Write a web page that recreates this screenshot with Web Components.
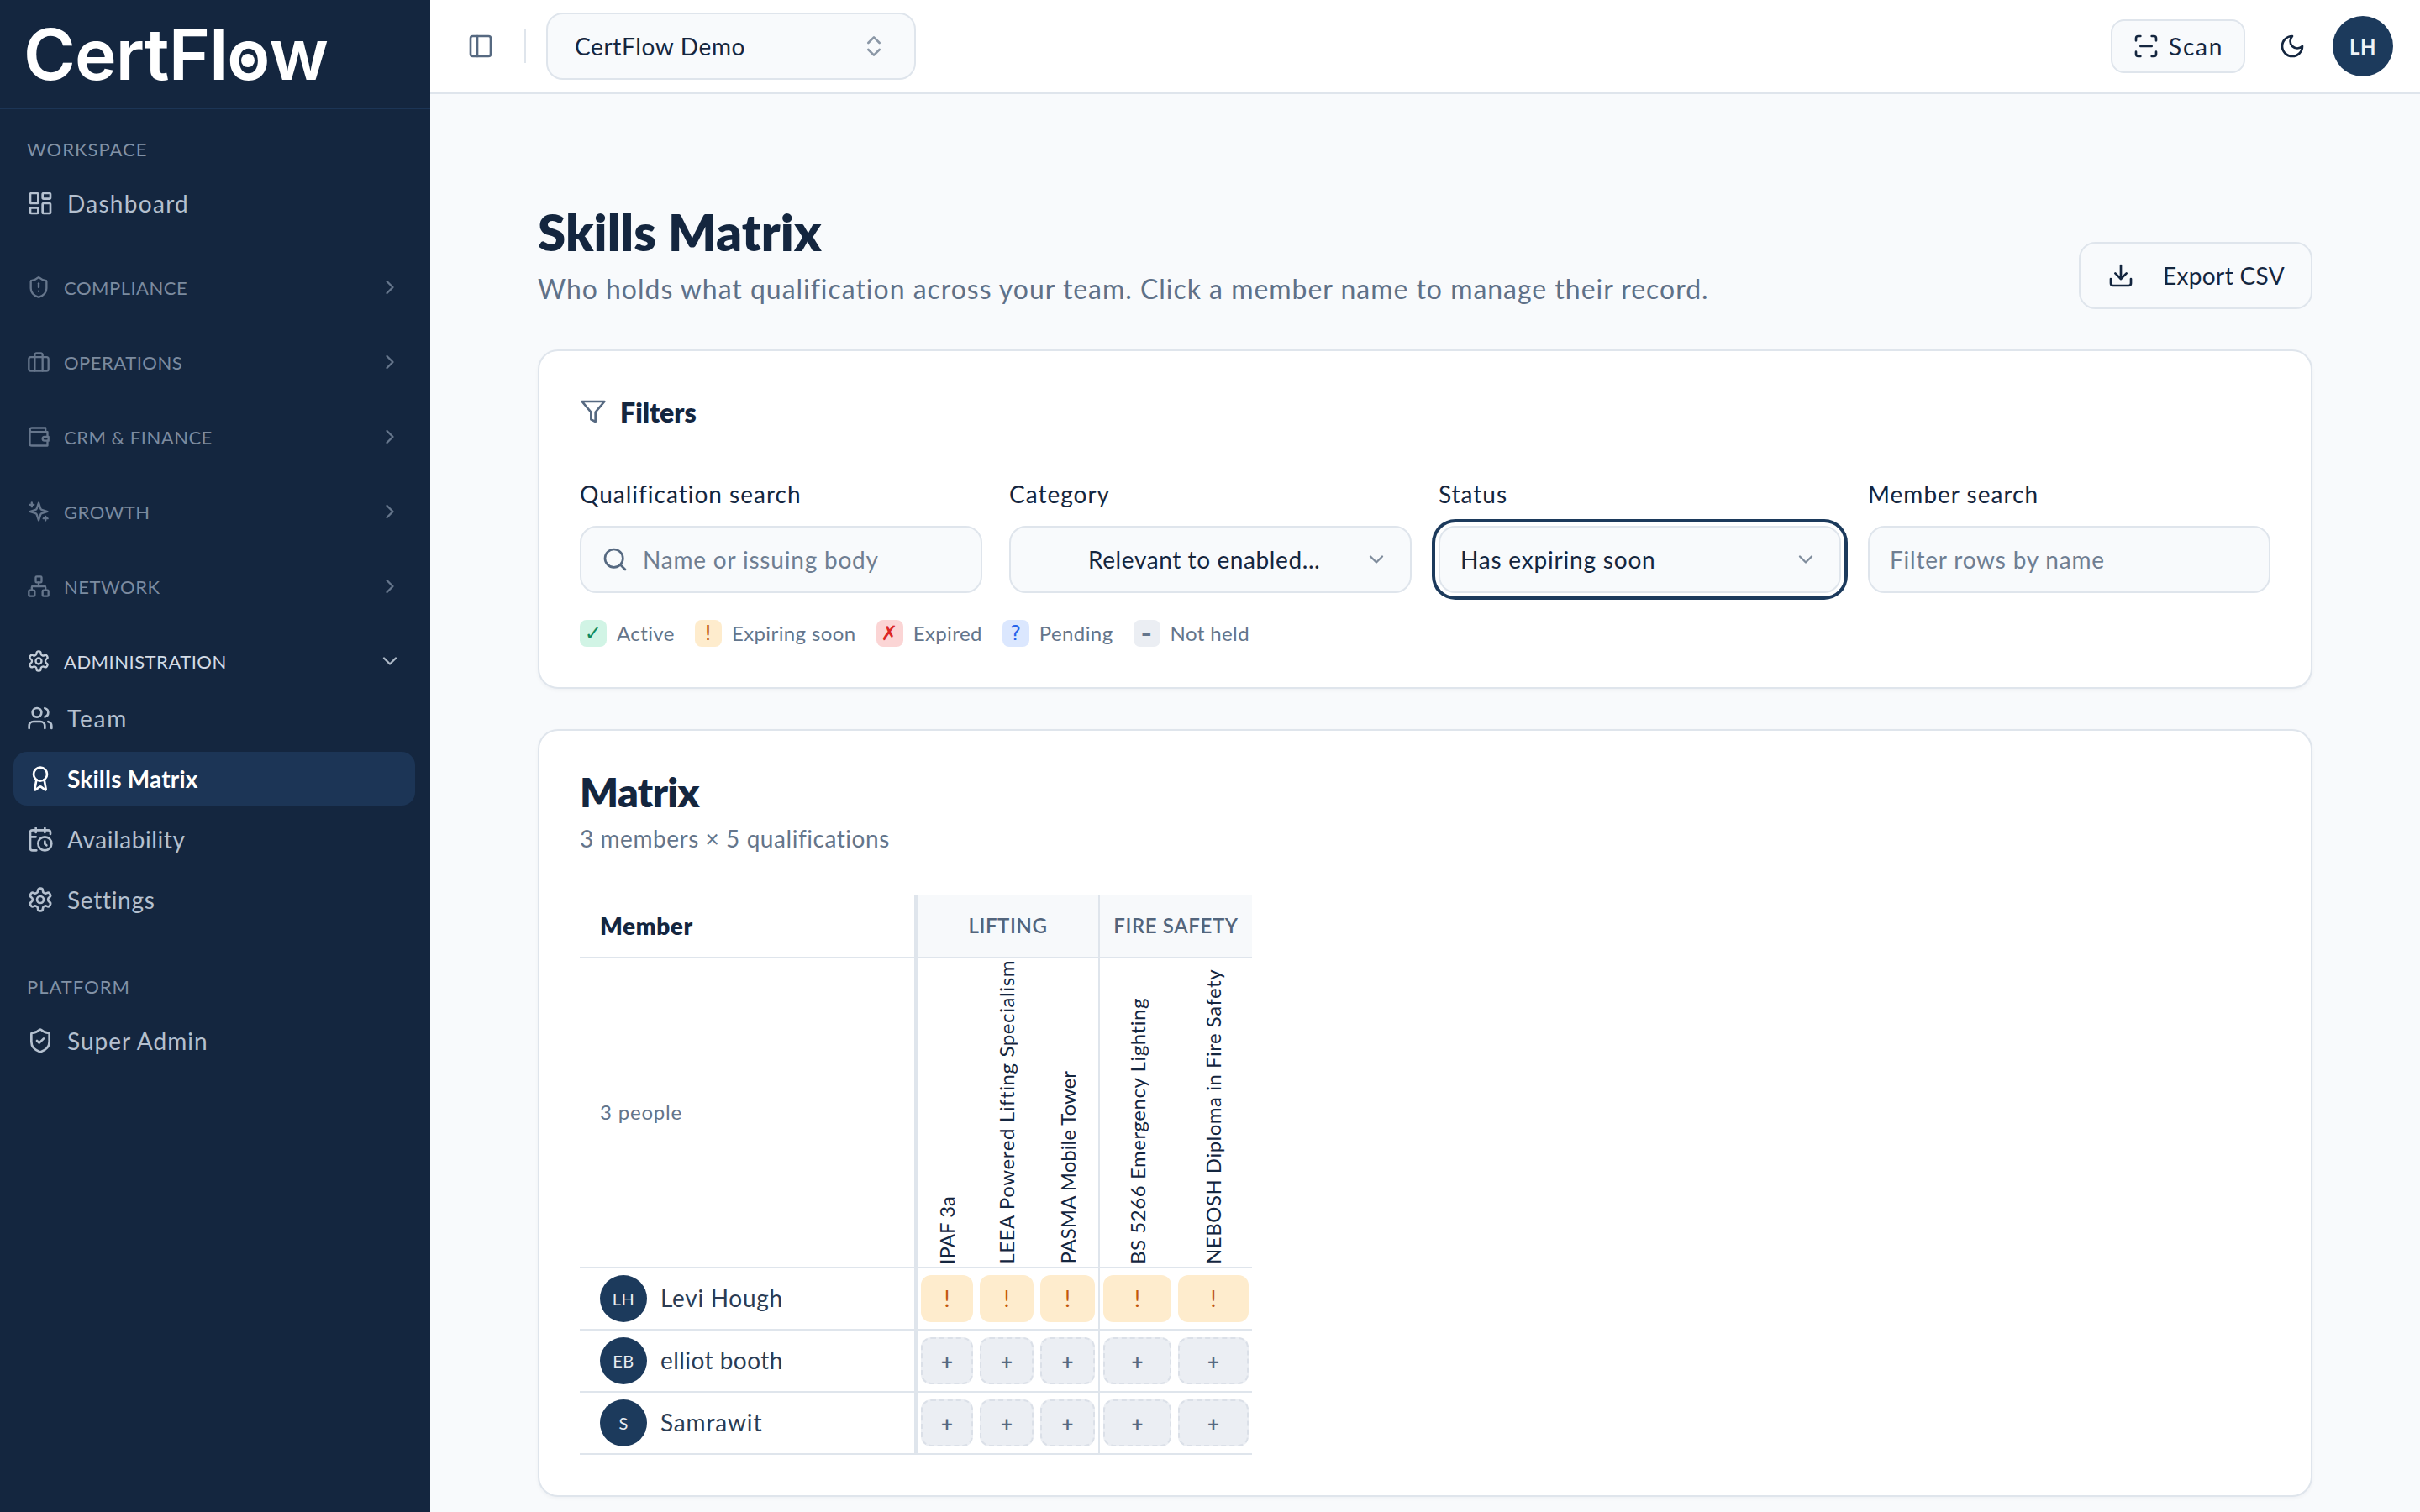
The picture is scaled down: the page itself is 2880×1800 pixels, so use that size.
<!doctype html>
<html lang="en">
<head>
<meta charset="utf-8">
<title>Skills Matrix</title>
<style>
html, body { margin: 0; height: 100%; background: #f8fafc; }
body { font-family: Lato, "Liberation Sans", sans-serif; color: #14263f; overflow: hidden; }
</style>
</head>
<body>
<app-shell>
  <side-bar slot="side"></side-bar>
  <top-bar slot="top"></top-bar>
  <page-head title="Skills Matrix" sub="Who holds what qualification across your team. Click a member name to manage their record."></page-head>
  <filter-card></filter-card>
  <matrix-card></matrix-card>
</app-shell>

<script>
var icons = {
  dashboard: '<rect width="7" height="9" x="3" y="3" rx="1"/><rect width="7" height="5" x="14" y="3" rx="1"/><rect width="7" height="9" x="14" y="12" rx="1"/><rect width="7" height="5" x="3" y="16" rx="1"/>',
  shieldAlert: '<path d="M20 13c0 5-3.5 7.5-7.66 8.95a1 1 0 0 1-.67-.01C7.5 20.5 4 18 4 13V6a1 1 0 0 1 1-1c2 0 4.5-1.2 6.24-2.72a1.17 1.17 0 0 1 1.52 0C14.51 3.81 17 5 19 5a1 1 0 0 1 1 1z"/><path d="M12 8v4"/><path d="M12 16h.01"/>',
  shieldCheck: '<path d="M20 13c0 5-3.5 7.5-7.66 8.95a1 1 0 0 1-.67-.01C7.5 20.5 4 18 4 13V6a1 1 0 0 1 1-1c2 0 4.5-1.2 6.24-2.72a1.17 1.17 0 0 1 1.52 0C14.51 3.81 17 5 19 5a1 1 0 0 1 1 1z"/><path d="m9 12 2 2 4-4"/>',
  briefcase: '<rect width="20" height="14" x="2" y="7" rx="2"/><path d="M16 21V5a2 2 0 0 0-2-2h-4a2 2 0 0 0-2 2v16"/>',
  wallet: '<path d="M21 12V7H5a2 2 0 0 1 0-4h14v4"/><path d="M3 5v14a2 2 0 0 0 2 2h16v-5"/><path d="M18 12a2 2 0 0 0 0 4h4v-4Z"/>',
  sparkles: '<path d="m12 3-1.912 5.813a2 2 0 0 1-1.275 1.275L3 12l5.813 1.912a2 2 0 0 1 1.275 1.275L12 21l1.912-5.813a2 2 0 0 1 1.275-1.275L21 12l-5.813-1.912a2 2 0 0 1-1.275-1.275L12 3Z"/><path d="M5 3v4"/><path d="M19 17v4"/><path d="M3 5h4"/><path d="M17 19h4"/>',
  network: '<rect x="16" y="16" width="6" height="6" rx="1"/><rect x="2" y="16" width="6" height="6" rx="1"/><rect x="9" y="2" width="6" height="6" rx="1"/><path d="M5 16v-3a1 1 0 0 1 1-1h12a1 1 0 0 1 1 1v3"/><path d="M12 12V8"/>',
  settings: '<path d="M12.22 2h-.44a2 2 0 0 0-2 2v.18a2 2 0 0 1-1 1.73l-.43.25a2 2 0 0 1-2 0l-.15-.08a2 2 0 0 0-2.73.73l-.22.38a2 2 0 0 0 .73 2.73l.15.1a2 2 0 0 1 1 1.72v.51a2 2 0 0 1-1 1.74l-.15.09a2 2 0 0 0-.73 2.73l.22.38a2 2 0 0 0 2.73.73l.15-.08a2 2 0 0 1 2 0l.43.25a2 2 0 0 1 1 1.73V20a2 2 0 0 0 2 2h.44a2 2 0 0 0 2-2v-.18a2 2 0 0 1 1-1.73l.43-.25a2 2 0 0 1 2 0l.15.08a2 2 0 0 0 2.73-.73l.22-.39a2 2 0 0 0-.73-2.73l-.15-.08a2 2 0 0 1-1-1.74v-.5a2 2 0 0 1 1-1.74l.15-.09a2 2 0 0 0 .73-2.73l-.22-.38a2 2 0 0 0-2.73-.73l-.15.08a2 2 0 0 1-2 0l-.43-.25a2 2 0 0 1-1-1.73V4a2 2 0 0 0-2-2z"/><circle cx="12" cy="12" r="3"/>',
  users: '<path d="M16 21v-2a4 4 0 0 0-4-4H6a4 4 0 0 0-4 4v2"/><circle cx="9" cy="7" r="4"/><path d="M22 21v-2a4 4 0 0 0-3-3.87"/><path d="M16 3.13a4 4 0 0 1 0 7.75"/>',
  award: '<path d="m15.477 12.89 1.515 8.526a.5.5 0 0 1-.81.47l-3.58-2.687a1 1 0 0 0-1.197 0l-3.586 2.686a.5.5 0 0 1-.81-.469l1.514-8.526"/><circle cx="12" cy="8" r="6"/>',
  calendarClock: '<path d="M21 7.5V6a2 2 0 0 0-2-2H5a2 2 0 0 0-2 2v14a2 2 0 0 0 2 2h3.5"/><path d="M16 2v4"/><path d="M8 2v4"/><path d="M3 10h5"/><path d="M17.5 17.5 16 16.3V14"/><circle cx="16" cy="16" r="6"/>',
  panelLeft: '<rect width="18" height="18" x="3" y="3" rx="2"/><path d="M9 3v18"/>',
  chevronsUpDown: '<path d="m7 15 5 5 5-5"/><path d="m7 9 5-5 5 5"/>',
  chevronRight: '<path d="m9 18 6-6-6-6"/>',
  chevronDown: '<path d="m6 9 6 6 6-6"/>',
  scan: '<path d="M3 7V5a2 2 0 0 1 2-2h2"/><path d="M17 3h2a2 2 0 0 1 2 2v2"/><path d="M21 17v2a2 2 0 0 1-2 2h-2"/><path d="M7 21H5a2 2 0 0 1-2-2v-2"/><path d="M7 12h10"/>',
  moon: '<path d="M12 3a6 6 0 0 0 9 9 9 9 0 1 1-9-9Z"/>',
  download: '<path d="M21 15v4a2 2 0 0 1-2 2H5a2 2 0 0 1-2-2v-4"/><polyline points="7 10 12 15 17 10"/><line x1="12" x2="12" y1="15" y2="3"/>',
  filter: '<polygon points="22 3 2 3 10 12.46 10 19 14 21 14 12.46 22 3"/>',
  search: '<circle cx="11" cy="11" r="8"/><path d="m21 21-4.3-4.3"/>'
};

// shadow root from a string, same for every element
function shadow(el, html) {
  var root = el.attachShadow({ mode: "open" });
  root.innerHTML = html;
  return root;
}

class UiIcon extends HTMLElement {
  connectedCallback() {
    var size = this.getAttribute("size") || 32;
    shadow(this, `
<style>
:host { display: inline-flex; flex: none; width: ${size}px; height: ${size}px; }
svg { width: 100%; height: 100%; fill: none; stroke: currentColor; stroke-width: 2; stroke-linecap: round; stroke-linejoin: round; }
</style>
<svg viewBox="0 0 24 24">${icons[this.getAttribute("name")]}</svg>`);
  }
}
customElements.define("ui-icon", UiIcon);

class AppShell extends HTMLElement {
  constructor() {
    super();
    shadow(this, `
<style>
:host { display: grid; grid-template-columns: 512px 1fr; grid-template-rows: 112px 1fr; width: 2880px; height: 1800px; overflow: hidden; }
main { padding: 128px 128px 0; display: flex; flex-direction: column; gap: 48px; min-width: 0; }
::slotted(side-bar) { grid-row: 1 / 3; }
</style>
<slot name="side"></slot>
<slot name="top"></slot>
<main><slot></slot></main>`);
  }
}
customElements.define("app-shell", AppShell);

class NavItem extends HTMLElement {
  connectedCallback() {
    var active = this.hasAttribute("active");
    shadow(this, `
<style>
:host { display: flex; align-items: center; gap: 16px; height: 64px; padding: 0 16px; border-radius: 16px; font-size: 28px; letter-spacing: ${this.getAttribute("track") || 1}px; color: #b4c0cf;
  background: ${active ? "#1c3556" : "transparent"}; ${active ? "color: #fff; font-weight: 700; letter-spacing: .2px;" : ""} }
</style>
<ui-icon name="${this.getAttribute("icon")}" size="32"></ui-icon><span><slot></slot></span>`);
  }
}
customElements.define("nav-item", NavItem);

class NavGroup extends HTMLElement {
  connectedCallback() {
    var open = this.hasAttribute("open");
    shadow(this, `
<style>
:host { display: flex; align-items: center; gap: 16px; height: 64px; padding: 0 16px; font-size: 22px; letter-spacing: .5px; color: ${open ? "#d3dbe5" : "#7c8b9f"}; }
span { flex: 1; }
.ic { color: ${open ? "#c2ccd8" : "#66768c"}; display: flex; }
.ch { color: ${open ? "#aeb9c7" : "#66768c"}; display: flex; }
</style>
<div class="ic"><ui-icon name="${this.getAttribute("icon")}" size="28"></ui-icon></div>
<span><slot></slot></span>
<div class="ch"><ui-icon name="${open ? "chevronDown" : "chevronRight"}" size="28"></ui-icon></div>`);
  }
}
customElements.define("nav-group", NavGroup);

class SideBar extends HTMLElement {
  constructor() {
    super();
    shadow(this, `
<style>
:host { display: block; background: #14263f; height: 1800px; }
.brand { height: 128px; border-bottom: 2px solid #1c3556; padding-left: 28px; display: flex; align-items: center; }
.logo { font-family: Inter, sans-serif; font-weight: 600; font-size: 84px; letter-spacing: -.9px; color: #fff; line-height: 1; position: relative; top: 1px; }
.o { position: relative; display: inline-block; }
.o::after { content: ""; position: absolute; left: 50%; top: 58%; width: 16px; height: 16px; margin: -8px 0 0 -8px; border-radius: 50%; background: #fff; }
nav { padding: 28px 18px 0 16px; display: flex; flex-direction: column; }
.label { height: 40px; line-height: 40px; padding-left: 16px; margin-bottom: 12px; font-size: 22px; letter-spacing: 1px; color: #8292a6; }
.groups { display: flex; flex-direction: column; gap: 25px; margin-top: 36px; }
.items { display: flex; flex-direction: column; gap: 8px; margin-top: 4px; }
.label.two { margin-top: 52px; }
</style>
<div class="brand"><div class="logo">CertFl<span class="o">o</span>w</div></div>
<nav>
  <div class="label">WORKSPACE</div>
  <nav-item icon="dashboard" track="1.3">Dashboard</nav-item>
  <div class="groups">
    <nav-group icon="shieldAlert">COMPLIANCE</nav-group>
    <nav-group icon="briefcase">OPERATIONS</nav-group>
    <nav-group icon="wallet">CRM &amp; FINANCE</nav-group>
    <nav-group icon="sparkles">GROWTH</nav-group>
    <nav-group icon="network">NETWORK</nav-group>
    <nav-group icon="settings" open>ADMINISTRATION</nav-group>
  </div>
  <div class="items">
    <nav-item icon="users" track="1.8">Team</nav-item>
    <nav-item icon="award" active>Skills Matrix</nav-item>
    <nav-item icon="calendarClock" track=".6">Availability</nav-item>
    <nav-item icon="settings" track=".7">Settings</nav-item>
  </div>
  <div class="label two">PLATFORM</div>
  <nav-item icon="shieldCheck">Super Admin</nav-item>
</nav>`);
  }
}
customElements.define("side-bar", SideBar);

class TopBar extends HTMLElement {
  constructor() {
    super();
    shadow(this, `
<style>
:host { display: flex; align-items: center; box-sizing: border-box; height: 112px; background: #fff; border-bottom: 2px solid #dfe5ec; padding: 0 32px 0 28px; font-size: 28px; letter-spacing: .65px; }
.toggle { width: 64px; display: flex; justify-content: center; color: #566981; }
.rule { width: 2px; height: 40px; background: #dfe5ec; margin: 0 24px 0 20px; }
.org { box-sizing: border-box; width: 440px; height: 80px; display: flex; align-items: center; justify-content: space-between; padding: 0 32px; background: #f8fafc; border: 2px solid #dfe5ec; border-radius: 20px; }
.org ui-icon { color: #8b97a6; }
.fill { flex: 1; }
.scan { box-sizing: border-box; height: 64px; width: 160px; display: flex; align-items: center; gap: 11px; padding: 0 24px; margin-right: 24px; background: #f8fafc; border: 2px solid #dfe5ec; border-radius: 16px; letter-spacing: 1.8px; }
.moon { width: 64px; display: flex; justify-content: center; }
.me { width: 72px; height: 72px; margin-left: 16px; border-radius: 50%; background: #1c3a5c; color: #f1f3f5; display: flex; align-items: center; justify-content: center; font-size: 24px; font-weight: 700; letter-spacing: .5px; }
</style>
<div class="toggle"><ui-icon name="panelLeft" size="32"></ui-icon></div>
<div class="rule"></div>
<div class="org"><span>CertFlow Demo</span><ui-icon name="chevronsUpDown" size="32"></ui-icon></div>
<div class="fill"></div>
<div class="scan"><ui-icon name="scan" size="32"></ui-icon><span>Scan</span></div>
<div class="moon"><ui-icon name="moon" size="32"></ui-icon></div>
<div class="me">LH</div>`);
  }
}
customElements.define("top-bar", TopBar);

class PageHead extends HTMLElement {
  connectedCallback() {
    shadow(this, `
<style>
:host { display: flex; align-items: flex-end; justify-content: space-between; }
h1 { margin: 0 0 8px; font-size: 60px; line-height: 72px; font-weight: 800; letter-spacing: .1px; color: #14263f; }
p { margin: 0; font-size: 32px; line-height: 48px; letter-spacing: .97px; color: #5f7188; }
.btn { box-sizing: border-box; width: 278px; height: 80px; display: flex; align-items: center; gap: 34px; padding: 0 32px; font-size: 28px; letter-spacing: .35px; white-space: nowrap; background: #f8fafc; border: 2px solid #dfe5ec; border-radius: 20px; }
</style>
<div><h1>${this.getAttribute("title")}</h1><p>${this.getAttribute("sub")}</p></div>
<div class="btn"><ui-icon name="download" size="32"></ui-icon><span>Export CSV</span></div>`);
  }
}
customElements.define("page-head", PageHead);

class FilterField extends HTMLElement {
  connectedCallback() {
    var kind = this.getAttribute("kind");
    var value = this.getAttribute("value");
    var lead = kind == "search" ? '<ui-icon class="lead" name="search" size="32"></ui-icon>' : "";
    var tail = kind == "select" ? '<ui-icon class="tail" name="chevronDown" size="28"></ui-icon>' : "";
    shadow(this, `
<style>
:host { display: block; min-width: 0; }
label { display: block; height: 40px; line-height: 38px; margin-bottom: 17px; font-size: 28px; letter-spacing: 1px; }
.box { box-sizing: border-box; height: 80px; display: flex; align-items: center; padding: 0 26px 0 ${this.getAttribute("pad") || 24}px; background: #f8fafc; border: 2px solid #dfe5ec; border-radius: 20px; font-size: 28px; letter-spacing: ${this.getAttribute("track") || .8}px; }
.box.focus { box-shadow: 0 0 0 4px #fff, 0 0 0 8px #1c3a5c; }
.text { flex: 1; white-space: nowrap; overflow: hidden; }
.ph { color: #6f7e92; }
.lead { color: #566981; margin-right: 17px; }
.tail { color: #7f8c9c; }
</style>
<label>${this.getAttribute("label")}</label>
<div class="box ${this.hasAttribute("focus") ? "focus" : ""}">${lead}<span class="text ${this.hasAttribute("placeholder") ? "ph" : ""}">${value}</span>${tail}</div>`);
  }
}
customElements.define("filter-field", FilterField);

class LegendChip extends HTMLElement {
  connectedCallback() {
    shadow(this, `
<style>
:host { display: flex; align-items: center; gap: 12px; font-size: 24px; letter-spacing: .4px; color: #64758b; }
b { width: 32px; height: 32px; display: flex; align-items: center; justify-content: center; border-radius: 8px; font: ${this.getAttribute("mark") == "–" ? 700 : 400} 24px "DejaVu Sans", sans-serif; background: ${this.getAttribute("bg")}; color: ${this.getAttribute("fg")}; }
span { padding-bottom: 2px; }
</style>
<b>${this.getAttribute("mark")}</b><span><slot></slot></span>`);
  }
}
customElements.define("legend-chip", LegendChip);

class FilterCard extends HTMLElement {
  constructor() {
    super();
    shadow(this, `
<style>
:host { display: block; background: #fff; border: 2px solid #dfe5ec; border-radius: 24px; padding: 48px; box-shadow: 0 2px 4px rgba(20,38,63,.04); }
.head { display: flex; align-items: center; gap: 16px; height: 48px; margin-bottom: 55px; font-size: 32px; font-weight: 800; }
.head ui-icon { color: #566981; }
.grid { display: grid; grid-template-columns: repeat(4, 1fr); gap: 32px; }
.legend { display: flex; gap: 24px; margin-top: 32px; }
</style>
<div class="head"><ui-icon name="filter" size="32"></ui-icon><span>Filters</span></div>
<div class="grid">
  <filter-field label="Qualification search" kind="search" value="Name or issuing body" placeholder></filter-field>
  <filter-field label="Category" kind="select" pad="92" track=".6" value="Relevant to enabled..."></filter-field>
  <filter-field label="Status" kind="select" value="Has expiring soon" focus></filter-field>
  <filter-field label="Member search" kind="text" value="Filter rows by name" placeholder></filter-field>
</div>
<div class="legend">
  <legend-chip mark="✓" bg="#d1f4e5" fg="#0f8a5f">Active</legend-chip>
  <legend-chip mark="!" bg="#feeccd" fg="#c2570c">Expiring soon</legend-chip>
  <legend-chip mark="✗" bg="#fbd5d5" fg="#dc2626">Expired</legend-chip>
  <legend-chip mark="?" bg="#dbe7fe" fg="#2563eb">Pending</legend-chip>
  <legend-chip mark="–" bg="#ebeef3" fg="#64758b">Not held</legend-chip>
</div>`);
  }
}
customElements.define("filter-card", FilterCard);

var quals = [
  { name: "IPAF 3a", track: 0 },
  { name: "LEEA Powered Lifting Specialism", track: .6 },
  { name: "PASMA Mobile Tower", track: 0 },
  { name: "BS 5266 Emergency Lighting", track: .55 },
  { name: "NEBOSH Diploma in Fire Safety", track: .5 }
];
var members = [
  { initials: "LH", name: "Levi Hough", state: "warn", track: .7 },
  { initials: "EB", name: "elliot booth", state: "none", track: .45 },
  { initials: "S", name: "Samrawit", state: "none", track: .85 }
];

class MatrixTable extends HTMLElement {
  constructor() {
    super();
    var edge = ["edge", "", "", "split", ""];
    var rows = members.map(function (m) {
      var cells = edge.map(function (cls) {
        var inner = m.state == "warn" ? '<span class="cell warn">!</span>' : '<span class="cell none">+</span>';
        return `<td class="pick ${cls}">${inner}</td>`;
      }).join("");
      return `<tr><td class="who"><div class="person"><span class="pic">${m.initials}</span><span style="letter-spacing:${m.track}px">${m.name}</span></div></td>${cells}</tr>`;
    }).join("");
    var names = quals.map(function (q, i) {
      return `<th class="rot ${edge[i]}"><span style="letter-spacing:${q.track}px">${q.name}</span></th>`;
    }).join("");
    shadow(this, `
<style>
:host { display: block; width: 800px; }
table { border-collapse: separate; border-spacing: 0; table-layout: fixed; width: 800px; }
th, td { padding: 0; border-bottom: 2px solid #dfe5ec; box-sizing: border-box; font-weight: 400; }
.edge { border-left: 4px solid #dfe5ec; }
.split { border-left: 2px solid #dfe5ec; }
.head th { height: 75px; padding-bottom: 2px; }
.member { text-align: left; padding-left: 24px; font-size: 28px; font-weight: 800; letter-spacing: .6px; }
.band { background: #f7f9fb; color: #53657c; font-size: 24px; font-weight: 600; letter-spacing: .6px; text-align: center; }
.labels th { height: 369px; }
.count { text-align: left; padding: 0 0 3px 24px; font-size: 24px; letter-spacing: .8px; color: #64758b; }
.rot { vertical-align: bottom; padding-bottom: 3px; font-size: 24px; color: #14263f; }
.rot span { display: block; width: 28px; margin: 0 auto; writing-mode: vertical-rl; transform: rotate(180deg); white-space: nowrap; line-height: 28px; }
tbody tr td { height: 74px; }
.who { padding-left: 24px; }
.person { display: flex; align-items: center; gap: 16px; font-size: 28px; color: #2a3c54; }
.person span:last-child { padding-bottom: 2px; }
.pic { width: 56px; height: 56px; border-radius: 50%; background: #1c3a5c; color: #e8ecf1; display: flex; align-items: center; justify-content: center; font-size: 20px; letter-spacing: .4px; }
.pick { padding: 0 4px; }
.cell { box-sizing: border-box; display: flex; align-items: center; justify-content: center; height: 56px; border-radius: 12px; }
.warn { background: #feeccd; color: #c2570c; font-size: 26px; font-weight: 400; }
.none { background: #ebeef3; border: 2px dashed #dbe0e8; color: #566981; font-size: 24px; font-weight: 700; }
</style>
<table>
  <colgroup><col style="width:398px"><col style="width:74px"><col style="width:72px"><col style="width:73px"><col style="width:91px"><col style="width:92px"></colgroup>
  <thead>
    <tr class="head"><th class="member">Member</th><th class="band edge" colspan="3">LIFTING</th><th class="band split" colspan="2">FIRE SAFETY</th></tr>
    <tr class="labels"><th class="count">3 people</th>${names}</tr>
  </thead>
  <tbody>${rows}</tbody>
</table>`);
  }
}
customElements.define("matrix-table", MatrixTable);

class MatrixCard extends HTMLElement {
  constructor() {
    super();
    shadow(this, `
<style>
:host { display: block; background: #fff; border: 2px solid #dfe5ec; border-radius: 24px; padding: 48px; box-shadow: 0 2px 4px rgba(20,38,63,.04); }
h2 { margin: 0 0 10px; font-size: 48px; line-height: 50px; font-weight: 800; letter-spacing: -.6px; color: #14263f; }
p { margin: 0 0 48px; font-size: 28px; line-height: 40px; letter-spacing: .55px; color: #64758b; }
</style>
<h2>Matrix</h2>
<p>3 members × 5 qualifications</p>
<matrix-table></matrix-table>`);
  }
}
customElements.define("matrix-card", MatrixCard);
</script>
</body>
</html>
